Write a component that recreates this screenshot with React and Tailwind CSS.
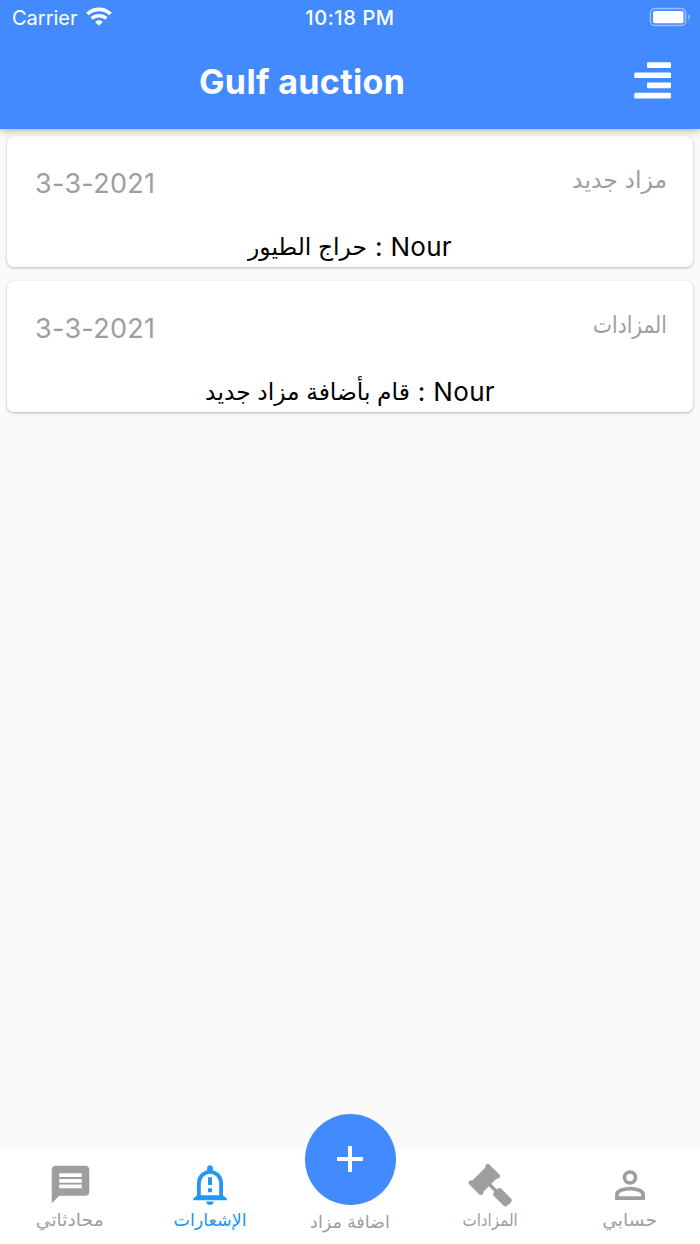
import { MdMessage } from "react-icons/md";

const notifications = [
  {
    id: 1,
    title: "مزاد جديد",
    titleClass: "text-[23.5px]",
    date: "3-3-2021",
    user: "Nour",
    message: "حراج الطيور",
  },
  {
    id: 2,
    title: "المزادات",
    titleClass: "text-[23.5px] origin-right scale-x-[.86]",
    date: "3-3-2021",
    user: "Nour",
    message: "قام بأضافة مزاد جديد",
  },
];

const BellIcon = () => (
  <svg viewBox="0 0 34 40" className="h-10 w-[34px]" fill="currentColor">
    <path d="M14.2 6V3a2.8 2.8 0 0 1 5.6 0v3z" />
    <path
      d="M5.9 31V18a11.1 11.1 0 0 1 22.2 0v13"
      fill="none"
      stroke="currentColor"
      strokeWidth="3.8"
    />
    <path d="M4.1 30.3h25.8l3.8 3.2v1.8H.3v-1.8z" />
    <path d="M15 12.2h4v7.8h-4zM15 23.2h4v4h-4z" />
    <path d="M13.3 36.6h7.4a3.7 3.3 0 0 1-7.4 0z" />
  </svg>
);

const GavelIcon = () => (
  <svg viewBox="8 8 44 44" className="h-11 w-11" fill="currentColor">
    <path
      d="M27.8 11.4l9.6 9.6M11.2 27.8l9.6 9.6"
      fill="none"
      stroke="currentColor"
      strokeWidth="5"
      strokeLinecap="round"
    />
    <path d="M26.4 11.4l11.2 11.2-15.6 15.6-11.2-11.2z" />
    <path d="M28.5 28.5l9 9" stroke="currentColor" strokeWidth="3.4" />
    <rect
      x="33"
      y="37"
      width="19"
      height="10.4"
      rx="3"
      transform="rotate(45 42.4 42.2)"
    />
  </svg>
);

const PersonIcon = () => (
  <svg
    viewBox="0 0 30 30"
    className="h-[30px] w-[30px]"
    fill="none"
    stroke="currentColor"
    strokeWidth="3.7"
  >
    <circle cx="15" cy="7.5" r="5.5" />
    <path d="M1.9 28.1v-3.6c0-4 8.2-5.8 13.1-5.8s13.1 1.8 13.1 5.8v3.6z" />
  </svg>
);

const StatusBar = () => (
  <div className="grid h-9 grid-cols-3 items-center pl-3 pr-[9px] text-white">
    <div className="flex items-center gap-2">
      <span className="text-[20px] leading-none">
        Carrier
      </span>
      <svg viewBox="0 0 26 19" className="-mt-[3px] h-[19px] w-[26px]" fill="none">
        <path
          d="M1.5 7C8 .8 18 .8 24.5 7"
          stroke="currentColor"
          strokeWidth="3.7"
        />
        <path
          d="M5.7 11.5c4.2-3.8 10.4-3.8 14.6 0"
          stroke="currentColor"
          strokeWidth="3.5"
        />
        <path
          d="M9.2 14.9c2.1-2.1 5.5-2.1 7.6 0L13 18.7z"
          fill="currentColor"
        />
      </svg>
    </div>
    <span className="-ml-[3px] text-center text-[20px] font-medium leading-none tracking-[0.6px]">
      10:18 PM
    </span>
    <svg viewBox="0 0 42 20" className="-mt-[2px] h-5 w-[42px] justify-self-end">
      <rect
        x="1.4"
        y="1.4"
        width="35.2"
        height="17.2"
        rx="4.6"
        fill="none"
        stroke="white"
        strokeOpacity="0.45"
        strokeWidth="1.5"
      />
      <rect x="4" y="4" width="30.5" height="12.2" rx="2" fill="white" />
      <path d="M39.4 7c2 1 2 5 0 6z" fill="white" fillOpacity="0.5" />
    </svg>
  </div>
);

const AppBar = () => (
  <header className="relative h-[128.5px] bg-[#448aff] shadow-[0_1px_8px_rgba(0,0,0,0.35)]">
    <StatusBar />
    <div className="flex h-[91px] items-center justify-between pl-[199px] pr-[29px]">
      <h1 className="text-[34px] font-bold leading-none tracking-[0.35px] text-white">
        Gulf auction
      </h1>
      <button className="-mt-[2px] text-white">
        <svg viewBox="0 0 37 37" className="h-[37px] w-[37px]" fill="currentColor">
          <rect x="13" y="0.3" width="24" height="5.7" rx="1.2" />
          <rect x="0.3" y="10.4" width="36.7" height="5.7" rx="1.2" />
          <rect x="13" y="20.6" width="24" height="5.7" rx="1.2" />
          <rect x="0.3" y="30.7" width="36.7" height="5.7" rx="1.2" />
        </svg>
      </button>
    </div>
  </header>
);

const NotificationCard = ({ item }) => (
  <div className="flex h-[131px] flex-col justify-between rounded-[7px] bg-white pb-[3px] pt-[30px] shadow-[0_1px_3px_rgba(0,0,0,0.28)]">
    <div className="flex items-start justify-between pl-7 pr-[26px] text-[#9e9e9e]">
      <span className="text-[27px] leading-[35px] tracking-[0.3px]">
        {item.date}
      </span>
      <span dir="rtl" className={`leading-[28px] ${item.titleClass}`}>
        {item.title}
      </span>
    </div>
    <p
      dir="rtl"
      className="flex items-center justify-center gap-2 text-[26px] leading-[34px] text-black"
    >
      <span className="tracking-[0.3px]">{item.user}</span>
      <span>:</span>
      <span className="text-[23.4px]">{item.message}</span>
    </p>
  </div>
);

const NavItem = ({ icon, label, labelClass, active }) => (
  <button
    className={`flex flex-1 flex-col items-center pt-[13px] ${
      active ? "text-[#2196f3]" : "text-[#9e9e9e]"
    }`}
  >
    <span className="flex h-[45px] items-center">{icon}</span>
    <span dir="rtl" className={`pt-px leading-[24px] ${labelClass}`}>
      {label}
    </span>
  </button>
);

const BottomNav = () => (
  <nav className="flex h-[95px] bg-white">
    <NavItem
      icon={<MdMessage size={45} />}
      label="محادثاتي"
      labelClass="text-[17.5px] scale-x-[1.07]"
    />
    <NavItem
      icon={<BellIcon />}
      label="الإشعارات"
      labelClass="text-[17.5px]"
      active
    />
    <div className="-mt-[35px] flex flex-1 flex-col items-center text-[#9e9e9e]">
      <button className="flex h-[91px] w-[91px] items-center justify-center rounded-full bg-[#448aff] pb-px text-white">
        <svg viewBox="0 0 26 26" className="h-[26px] w-[26px]">
          <path d="M13 0v26M0 13h26" stroke="currentColor" strokeWidth="4" />
        </svg>
      </button>
      <span dir="rtl" className="mt-[5px] text-[17.6px] leading-[24px]">
        اضافة مزاد
      </span>
    </div>
    <NavItem
      icon={<GavelIcon />}
      label="المزادات"
      labelClass="text-[17px] scale-x-[.89]"
    />
    <NavItem
      icon={<PersonIcon />}
      label="حسابي"
      labelClass="text-[17.5px] scale-x-[1.07]"
    />
  </nav>
);

const App = () => {
  return (
    <div className="flex h-[1244px] w-[700px] flex-col bg-[#fafafa] font-['Inter','DejaVu_Sans',sans-serif]">
      <AppBar />
      <main className="flex flex-1 flex-col gap-[14px] px-[7px] pt-[7.5px]">
        {notifications.map((item) => (
          <NotificationCard key={item.id} item={item} />
        ))}
      </main>
      <BottomNav />
    </div>
  );
};

export default App;
